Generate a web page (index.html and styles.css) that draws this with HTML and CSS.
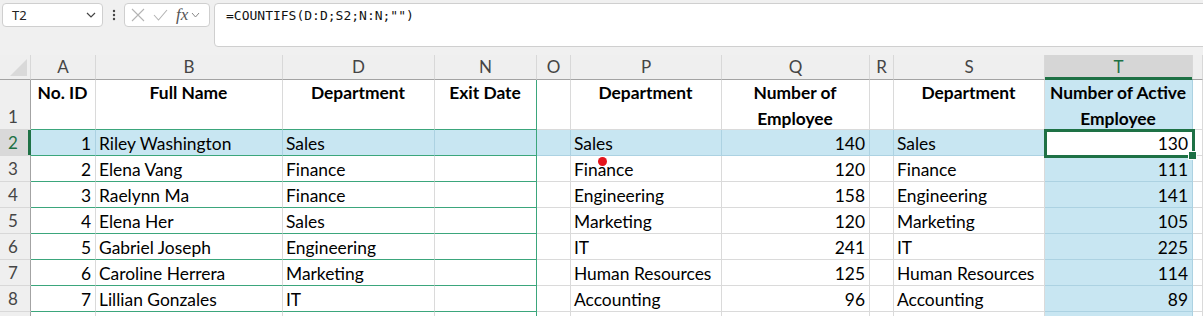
FILE: index.html
```html
<!DOCTYPE html>
<html lang="en">
<head>
    <meta charset="UTF-8">
    <meta name="viewport" content="width=device-width, initial-scale=1.0">
    <title>Active Employees</title>
    <link rel="stylesheet" href="styles.css">
</head>
<body>
    <div class="formula-bar">
        <div class="name-box">
            <span>T2</span>
            <svg class="chev" width="10" height="6" viewBox="0 0 10 6"><path d="M1 1l4 4 4-4" fill="none" stroke="#444" stroke-width="1.2"/></svg>
        </div>
        <div class="more">
            <svg width="4" height="12" viewBox="0 0 4 12"><circle cx="2" cy="2" r="1.2" fill="#444"/><circle cx="2" cy="6" r="1.2" fill="#444"/><circle cx="2" cy="10" r="1.2" fill="#444"/></svg>
        </div>
        <div class="fx-box">
            <svg width="14" height="14" viewBox="0 0 14 14"><path d="M1 1l12 12M13 1L1 13" stroke="#b4b4b4" stroke-width="1.1"/></svg>
            <svg width="15" height="12" viewBox="0 0 15 12"><path d="M1 6l4.5 5L14 1" fill="none" stroke="#b4b4b4" stroke-width="1.1"/></svg>
            <span class="fx">fx</span>
            <svg width="9" height="6" viewBox="0 0 9 6"><path d="M1 1l3.5 4L8 1" fill="none" stroke="#888" stroke-width="1"/></svg>
        </div>
        <div class="formula">=COUNTIFS(D:D;S2;N:N;"")</div>
    </div>

    <div class="sheet">
        <!-- column headers -->
        <div class="c ch corner"></div>
        <div class="c ch">A</div>
        <div class="c ch">B</div>
        <div class="c ch">D</div>
        <div class="c ch">N</div>
        <div class="c ch">O</div>
        <div class="c ch">P</div>
        <div class="c ch">Q</div>
        <div class="c ch">R</div>
        <div class="c ch">S</div>
        <div class="c ch sel">T</div>
        <div class="c ch"></div>

        <!-- row 1 -->
        <div class="c rh">1</div>
        <div class="c t hd">No. ID</div>
        <div class="c t hd">Full Name</div>
        <div class="c t hd">Department</div>
        <div class="c t te hd">Exit Date</div>
        <div class="c"></div>
        <div class="c hd">Department</div>
        <div class="c hd">Number of<br>Employee</div>
        <div class="c"></div>
        <div class="c hd">Department</div>
        <div class="c hl hd">Number of Active<br>Employee</div>
        <div class="c"></div>

        <!-- row 2 -->
        <div class="c rh sel">2</div>
        <div class="c hl t r">1</div>
        <div class="c hl t">Riley Washington</div>
        <div class="c hl t">Sales</div>
        <div class="c hl t te"></div>
        <div class="c hl"></div>
        <div class="c hl">Sales</div>
        <div class="c hl r">140</div>
        <div class="c hl"></div>
        <div class="c hl">Sales</div>
        <div class="c r active">130</div>
        <div class="c"></div>

        <!-- row 3 -->
        <div class="c rh">3</div>
        <div class="c t r">2</div>
        <div class="c t">Elena Vang</div>
        <div class="c t">Finance</div>
        <div class="c t te"></div>
        <div class="c"></div>
        <div class="c">Finance</div>
        <div class="c r">120</div>
        <div class="c"></div>
        <div class="c">Finance</div>
        <div class="c hl r">111</div>
        <div class="c"></div>

        <!-- row 4 -->
        <div class="c rh">4</div>
        <div class="c t r">3</div>
        <div class="c t">Raelynn Ma</div>
        <div class="c t">Finance</div>
        <div class="c t te"></div>
        <div class="c"></div>
        <div class="c">Engineering</div>
        <div class="c r">158</div>
        <div class="c"></div>
        <div class="c">Engineering</div>
        <div class="c hl r">141</div>
        <div class="c"></div>

        <!-- row 5 -->
        <div class="c rh">5</div>
        <div class="c t r">4</div>
        <div class="c t">Elena Her</div>
        <div class="c t">Sales</div>
        <div class="c t te"></div>
        <div class="c"></div>
        <div class="c">Marketing</div>
        <div class="c r">120</div>
        <div class="c"></div>
        <div class="c">Marketing</div>
        <div class="c hl r">105</div>
        <div class="c"></div>

        <!-- row 6 -->
        <div class="c rh">6</div>
        <div class="c t r">5</div>
        <div class="c t">Gabriel Joseph</div>
        <div class="c t">Engineering</div>
        <div class="c t te"></div>
        <div class="c"></div>
        <div class="c">IT</div>
        <div class="c r">241</div>
        <div class="c"></div>
        <div class="c">IT</div>
        <div class="c hl r">225</div>
        <div class="c"></div>

        <!-- row 7 -->
        <div class="c rh">7</div>
        <div class="c t r">6</div>
        <div class="c t">Caroline Herrera</div>
        <div class="c t">Marketing</div>
        <div class="c t te"></div>
        <div class="c"></div>
        <div class="c">Human Resources</div>
        <div class="c r">125</div>
        <div class="c"></div>
        <div class="c">Human Resources</div>
        <div class="c hl r">114</div>
        <div class="c"></div>

        <!-- row 8 -->
        <div class="c rh">8</div>
        <div class="c t r">7</div>
        <div class="c t">Lillian Gonzales</div>
        <div class="c t">IT</div>
        <div class="c t te"></div>
        <div class="c"></div>
        <div class="c">Accounting</div>
        <div class="c r">96</div>
        <div class="c"></div>
        <div class="c">Accounting</div>
        <div class="c hl r">89</div>
        <div class="c"></div>

        <!-- row 9, only its top edge shows -->
        <div class="c rh"></div>
        <div class="c t"></div>
        <div class="c t"></div>
        <div class="c t"></div>
        <div class="c t te"></div>
        <div class="c"></div>
        <div class="c"></div>
        <div class="c"></div>
        <div class="c"></div>
        <div class="c"></div>
        <div class="c hl"></div>
        <div class="c"></div>
    </div>

    <span class="pointer-dot"></span>
</body>
</html>
```

FILE: styles.css
```css
* {
    box-sizing: border-box;
}
body {
    margin: 0;
    height: 316px;
    overflow: hidden;
    background-color: #f0f0f0;
    font-family: Lato, "Liberation Sans", sans-serif;
}

/* formula bar */
.formula-bar {
    height: 55px;
    display: flex;
    align-items: flex-start;
    padding: 3px 0 0 2px;
}
.name-box {
    width: 101px;
    height: 24px;
    background-color: white;
    border: 1px solid #cfcfcf;
    border-radius: 4px;
    display: flex;
    align-items: center;
    justify-content: space-between;
    padding: 0 6px 0 9px;
    font-family: "Noto Sans", sans-serif;
    font-size: 13px;
    color: #222;
}
.more {
    width: 21px;
    height: 24px;
    display: flex;
    align-items: center;
    justify-content: center;
}
.fx-box {
    width: 86px;
    height: 24px;
    background-color: white;
    border: 1px solid #cfcfcf;
    border-radius: 4px;
    display: flex;
    align-items: center;
    gap: 8px;
    padding-left: 6px;
}
.fx {
    font-family: "Liberation Serif", serif;
    font-style: italic;
    font-size: 17px;
    color: #555;
    margin-right: -5px;
}
.formula {
    flex: 1;
    height: 44px;
    margin: 0 -4px 0 4px;
    background-color: white;
    border: 1px solid #cfcfcf;
    border-radius: 4px;
    padding: 4px 11px;
    font-family: "DejaVu Sans Mono", monospace;
    font-size: 13px;
    color: #111;
}

/* grid */
.sheet {
    display: grid;
    grid-template-columns: 31px 65px 187px 152px 102px 34px 151px 148px 24px 151px 148px 1fr;
    grid-template-rows: 25px 50px repeat(8, 26px);
    background-color: white;
    font-size: 17.4px;
}
.c {
    border-right: 1px solid #dadada;
    border-bottom: 1px solid #dadada;
    padding: 1px 4px 0 3px;
    line-height: 25px;
    white-space: nowrap;
    overflow: hidden;
    color: #000;
}
.ch {
    background-color: #efefef;
    border-right-color: #d8d8d8;
    border-bottom-color: #a3a3a3;
    text-align: center;
    line-height: 24px;
    padding: 0;
    color: #454545;
    font-size: 17px;
}
.ch.sel {
    background-color: #d6d6d6;
    color: #1e7145;
    border-bottom-color: #1e7145;
    box-shadow: inset 0 -2px 0 #1e7145;
}
.corner {
    position: relative;
}
.corner::after {
    content: "";
    position: absolute;
    right: 3px;
    bottom: 3px;
    border-left: 17px solid transparent;
    border-bottom: 17px solid #d9d9d9;
}
.rh {
    background-color: #efefef;
    border-right-color: #a3a3a3;
    border-bottom-color: #d8d8d8;
    color: #454545;
    padding: 0 0 0 8px;
    display: flex;
    align-items: flex-end;
    font-size: 17px;
}
.rh.sel {
    background-color: #d9d9d9;
    color: #1e7145;
    border-right-color: #1e7145;
    box-shadow: inset -2px 0 0 #1e7145;
}
.hd {
    font-weight: bold;
    text-align: center;
    white-space: normal;
    line-height: 26px;
    padding-top: 0;
}
.r {
    text-align: right;
}
.hl {
    background-color: #c8e6f2;
    border-right-color: #acd2e2;
    border-bottom-color: #acd2e2;
}
.t {
    border-bottom-color: #3ba67c;
}
.te {
    border-right-color: #3ba67c;
}

/* active cell */
.active {
    position: relative;
    overflow: visible;
    background-color: white;
}
.active::before {
    content: "";
    position: absolute;
    left: -1px;
    top: -1px;
    right: -3px;
    bottom: -3px;
    border: 3px solid #1e7145;
    z-index: 2;
}
.active::after {
    content: "";
    position: absolute;
    right: -5px;
    bottom: -5px;
    width: 7px;
    height: 7px;
    background-color: #1e7145;
    border: 1px solid white;
    z-index: 3;
}

.pointer-dot {
    position: absolute;
    left: 598px;
    top: 157px;
    width: 9px;
    height: 9px;
    border-radius: 50%;
    background-color: #e3141c;
}
```
